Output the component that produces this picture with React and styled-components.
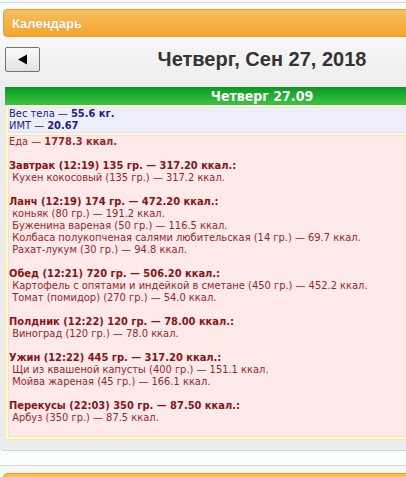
import React from "react";
import styled, { createGlobalStyle } from "styled-components";

const Global = createGlobalStyle`
  html, body { margin: 0; padding: 0; overflow: hidden; background: #fafefa; }
  body { font-family: "Liberation Sans", Arial, sans-serif; }
`;

const Page = styled.div`
  width: 524px;
`;

const TopStrip = styled.div`
  height: 2px;
  background: #f6f6f6;
  border-bottom: 1px solid #d9d9d9;
  margin-bottom: 6px;
`;

const Section = styled.section`
  display: flex;
  flex-direction: column;
`;

const SectionHeader = styled.div`
  margin-left: 3px;
  height: 28px;
  box-sizing: border-box;
  border: 1px solid #ec9c22;
  border-radius: 4px;
  background: linear-gradient(#f9be5f, #f5a52c);
  display: flex;
  align-items: center;
  padding-left: 8px;
  color: #fff;
  font-weight: bold;
  font-size: 13px;
  text-shadow: 0 0 1px rgba(160, 90, 0, 0.4);
`;

const SectionBody = styled.div`
  background: linear-gradient(#f7f7f7, #ececec 55px, #ececec);
  border-bottom: 1px solid #d6d6d6;
  border-radius: 0 0 4px 4px;
  padding: 10px 5px 10px 5px;
  display: flex;
  flex-direction: column;
`;

const DayNav = styled.div`
  display: grid;
  grid-template-columns: 35px 1fr 35px;
  align-items: center;
  height: 25px;
  margin-bottom: 15px;
`;

const NavButton = styled.button`
  width: 35px;
  height: 25px;
  padding: 0;
  border: 1px solid #737373;
  border-radius: 2px;
  background: linear-gradient(#fafafa, #e2e2e2);
  display: flex;
  align-items: center;
  justify-content: center;
`;

const DateTitle = styled.h1`
  margin: 0;
  text-align: center;
  font-family: "Liberation Sans", Arial, sans-serif;
  font-size: 20px;
  font-weight: bold;
  color: #333;
`;

const DayCard = styled.div`
  display: flex;
  flex-direction: column;
`;

const DayBar = styled.div`
  height: 18px;
  background: linear-gradient(#069a1e, #3ec443);
  color: #fff;
  font-family: "DejaVu Sans Condensed", "DejaVu Sans", sans-serif;
  font-weight: bold;
  font-size: 14px;
  line-height: 18px;
  text-align: center;
`;

const DayTable = styled.div`
  background: #fffbd2;
  border: 1px solid #f3eaa6;
  border-top: none;
  padding: 2px;
  display: flex;
  flex-direction: column;
  gap: 2px;
`;

const Cell = styled.div`
  background: ${(p) => (p.$tone === "blue" ? "#eeeefb" : "#ffeaea")};
  color: ${(p) => (p.$tone === "blue" ? "#1c1c8e" : "#a52222")};
  border: 1px solid ${(p) => (p.$tone === "blue" ? "#e2e2f4" : "#f8dcdc")};
  font-family: "DejaVu Sans Condensed", "DejaVu Sans", sans-serif;
  font-size: 11px;
  line-height: 12px;
  padding: 0 0 ${(p) => (p.$tone === "blue" ? "0" : "12px")} 0;
`;

const Line = styled.div`
  white-space: pre;
  min-height: 12px;
`;

const Strong = styled.b`
  font-weight: bold;
`;

const MealHead = styled.div`
  font-weight: bold;
  color: #8a1414;
  white-space: pre;
`;

const Item = styled.div`
  white-space: pre;
  color: #9c2626;
`;

const Gap = styled.div`
  height: 12px;
`;

const Spacer = styled.div`
  height: 14px;
  border-bottom: 1px solid #dcdcdc;
`;

const NextStrip = styled.div`
  height: 7px;
  background: #f7f7f7;
`;

const meals = [
  {
    head: "Завтрак (12:19) 135 гр. — 317.20 ккал.:",
    items: ["Кухен кокосовый (135 гр.) — 317.2 ккал."],
  },
  {
    head: "Ланч (12:19) 174 гр. — 472.20 ккал.:",
    items: [
      "коньяк (80 гр.) — 191.2 ккал.",
      "Буженина вареная (50 гр.) — 116.5 ккал.",
      "Колбаса полукопченая салями любительская (14 гр.) — 69.7 ккал.",
      "Рахат-лукум (30 гр.) — 94.8 ккал.",
    ],
  },
  {
    head: "Обед (12:21) 720 гр. — 506.20 ккал.:",
    items: [
      "Картофель с опятами и индейкой в сметане (450 гр.) — 452.2 ккал.",
      "Томат (помидор) (270 гр.) — 54.0 ккал.",
    ],
  },
  {
    head: "Полдник (12:22) 120 гр. — 78.00 ккал.:",
    items: ["Виноград (120 гр.) — 78.0 ккал."],
  },
  {
    head: "Ужин (12:22) 445 гр. — 317.20 ккал.:",
    items: [
      "Щи из квашеной капусты (400 гр.) — 151.1 ккал.",
      "Мойва жареная (45 гр.) — 166.1 ккал.",
    ],
  },
  {
    head: "Перекусы (22:03) 350 гр. — 87.50 ккал.:",
    items: ["Арбуз (350 гр.) — 87.5 ккал."],
  },
];

export default function App() {
  return (
    <Page>
      <Global />
      <TopStrip />
      <Section>
        <SectionHeader>Календарь</SectionHeader>
        <SectionBody>
          <DayNav>
            <NavButton aria-label="Назад">
              <svg width="11" height="11" viewBox="0 0 11 11">
                <polygon points="1,5.5 10,0.5 10,10.5" fill="#000" />
              </svg>
            </NavButton>
            <DateTitle>Четверг, Сен 27, 2018</DateTitle>
            <span />
          </DayNav>
          <DayCard>
            <DayBar>Четверг 27.09</DayBar>
            <DayTable>
              <Cell $tone="blue">
                <Line>
                  Вес тела — <Strong>55.6 кг.</Strong>
                </Line>
                <Line>
                  ИМТ — <Strong>20.67</Strong>
                </Line>
              </Cell>
              <Cell $tone="pink">
                <Line>
                  Еда — <Strong>1778.3 ккал.</Strong>
                </Line>
                {meals.map((m) => (
                  <React.Fragment key={m.head}>
                    <Gap />
                    <MealHead>{m.head}</MealHead>
                    {m.items.map((it) => (
                      <Item key={it}>{" " + it}</Item>
                    ))}
                  </React.Fragment>
                ))}
              </Cell>
            </DayTable>
          </DayCard>
        </SectionBody>
      </Section>
      <Spacer />
      <NextStrip />
      <Section>
        <SectionHeader />
      </Section>
    </Page>
  );
}
